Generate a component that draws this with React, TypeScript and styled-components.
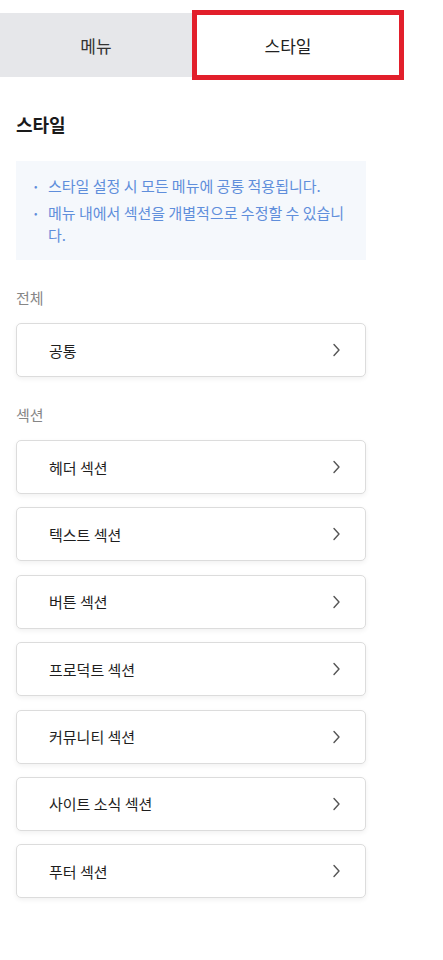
import React from "react";
import styled, { createGlobalStyle } from "styled-components";

const Global = createGlobalStyle`
  html, body { margin: 0; padding: 0; background: #ffffff; }
  body { font-family: "Noto Sans CJK KR", "Noto Sans", sans-serif; color: #222; }
`;

const Panel = styled.div`
  width: 384px;
  padding-top: 13px;
  padding-bottom: 40px;
`;

const TabBar = styled.div`
  position: relative;
  display: grid;
  grid-template-columns: 1fr 1fr;
  height: 64px;
`;

const Tab = styled.div<{ $active?: boolean }>`
  display: flex;
  align-items: center;
  justify-content: center;
  font-size: 17px;
  color: ${(p) => (p.$active ? "#222" : "#333")};
  background: ${(p) => (p.$active ? "#ffffff" : "#e6e7ea")};
`;

const Highlight = styled.div`
  position: absolute;
  left: 192px;
  top: -3px;
  width: 212px;
  height: 70px;
  box-sizing: border-box;
  border: 5px solid #e21f2b;
  pointer-events: none;
`;

const Content = styled.div`
  padding: 0 18px 0 16px;
  display: flex;
  flex-direction: column;
`;

const Heading = styled.h2`
  margin: 33px 0 0;
  font-size: 18px;
  line-height: 28px;
  font-weight: 700;
  color: #1a1a1a;
`;

const InfoBox = styled.ul`
  list-style: none;
  margin: 23px 0 0;
  padding: 14px 14px 14px 18px;
  background: #f5f8fc;
  display: flex;
  flex-direction: column;
  gap: 5px;
`;

const InfoItem = styled.li`
  display: flex;
  font-size: 15px;
  line-height: 22px;
  color: #5f8edb;
`;

const Bullet = styled.span`
  flex: 0 0 14px;
  font-size: 10px;
`;

const Label = styled.div<{ $top: number }>`
  margin-top: ${(p) => p.$top}px;
  font-size: 15px;
  line-height: 20px;
  color: #868686;
`;

const CardList = styled.div`
  margin-top: 15px;
  display: flex;
  flex-direction: column;
  gap: 13.4px;
`;

const Card = styled.button`
  all: unset;
  box-sizing: border-box;
  display: flex;
  align-items: center;
  justify-content: space-between;
  height: 54px;
  padding: 0 24px 0 32px;
  border: 1px solid #dcdcdc;
  border-radius: 5px;
  background: #fff;
  box-shadow: 0 2px 5px rgba(0, 0, 0, 0.06);
  font-size: 15px;
  color: #1e1e1e;
  cursor: pointer;
`;

const Chevron = () => (
  <svg width="9" height="14" viewBox="0 0 9 14" fill="none">
    <path d="M2 1.5L7 7L2 12.5" stroke="#555" strokeWidth="1.4" strokeLinecap="round" strokeLinejoin="round" />
  </svg>
);

const sections = [
  "헤더 섹션",
  "텍스트 섹션",
  "버튼 섹션",
  "프로덕트 섹션",
  "커뮤니티 섹션",
  "사이트 소식 섹션",
  "푸터 섹션",
];

export default function App() {
  return (
    <>
      <Global />
      <Panel>
        <TabBar>
          <Tab>메뉴</Tab>
          <Tab $active>스타일</Tab>
          <Highlight />
        </TabBar>
        <Content>
          <Heading>스타일</Heading>
          <InfoBox>
            <InfoItem>
              <Bullet>•</Bullet>
              <span>스타일 설정 시 모든 메뉴에 공통 적용됩니다.</span>
            </InfoItem>
            <InfoItem>
              <Bullet>•</Bullet>
              <span>메뉴 내에서 섹션을 개별적으로 수정할 수 있습니다.</span>
            </InfoItem>
          </InfoBox>
          <Label $top={28}>전체</Label>
          <CardList>
            <Card>
              <span>공통</span>
              <Chevron />
            </Card>
          </CardList>
          <Label $top={28}>섹션</Label>
          <CardList>
            {sections.map((s) => (
              <Card key={s}>
                <span>{s}</span>
                <Chevron />
              </Card>
            ))}
          </CardList>
        </Content>
      </Panel>
    </>
  );
}
